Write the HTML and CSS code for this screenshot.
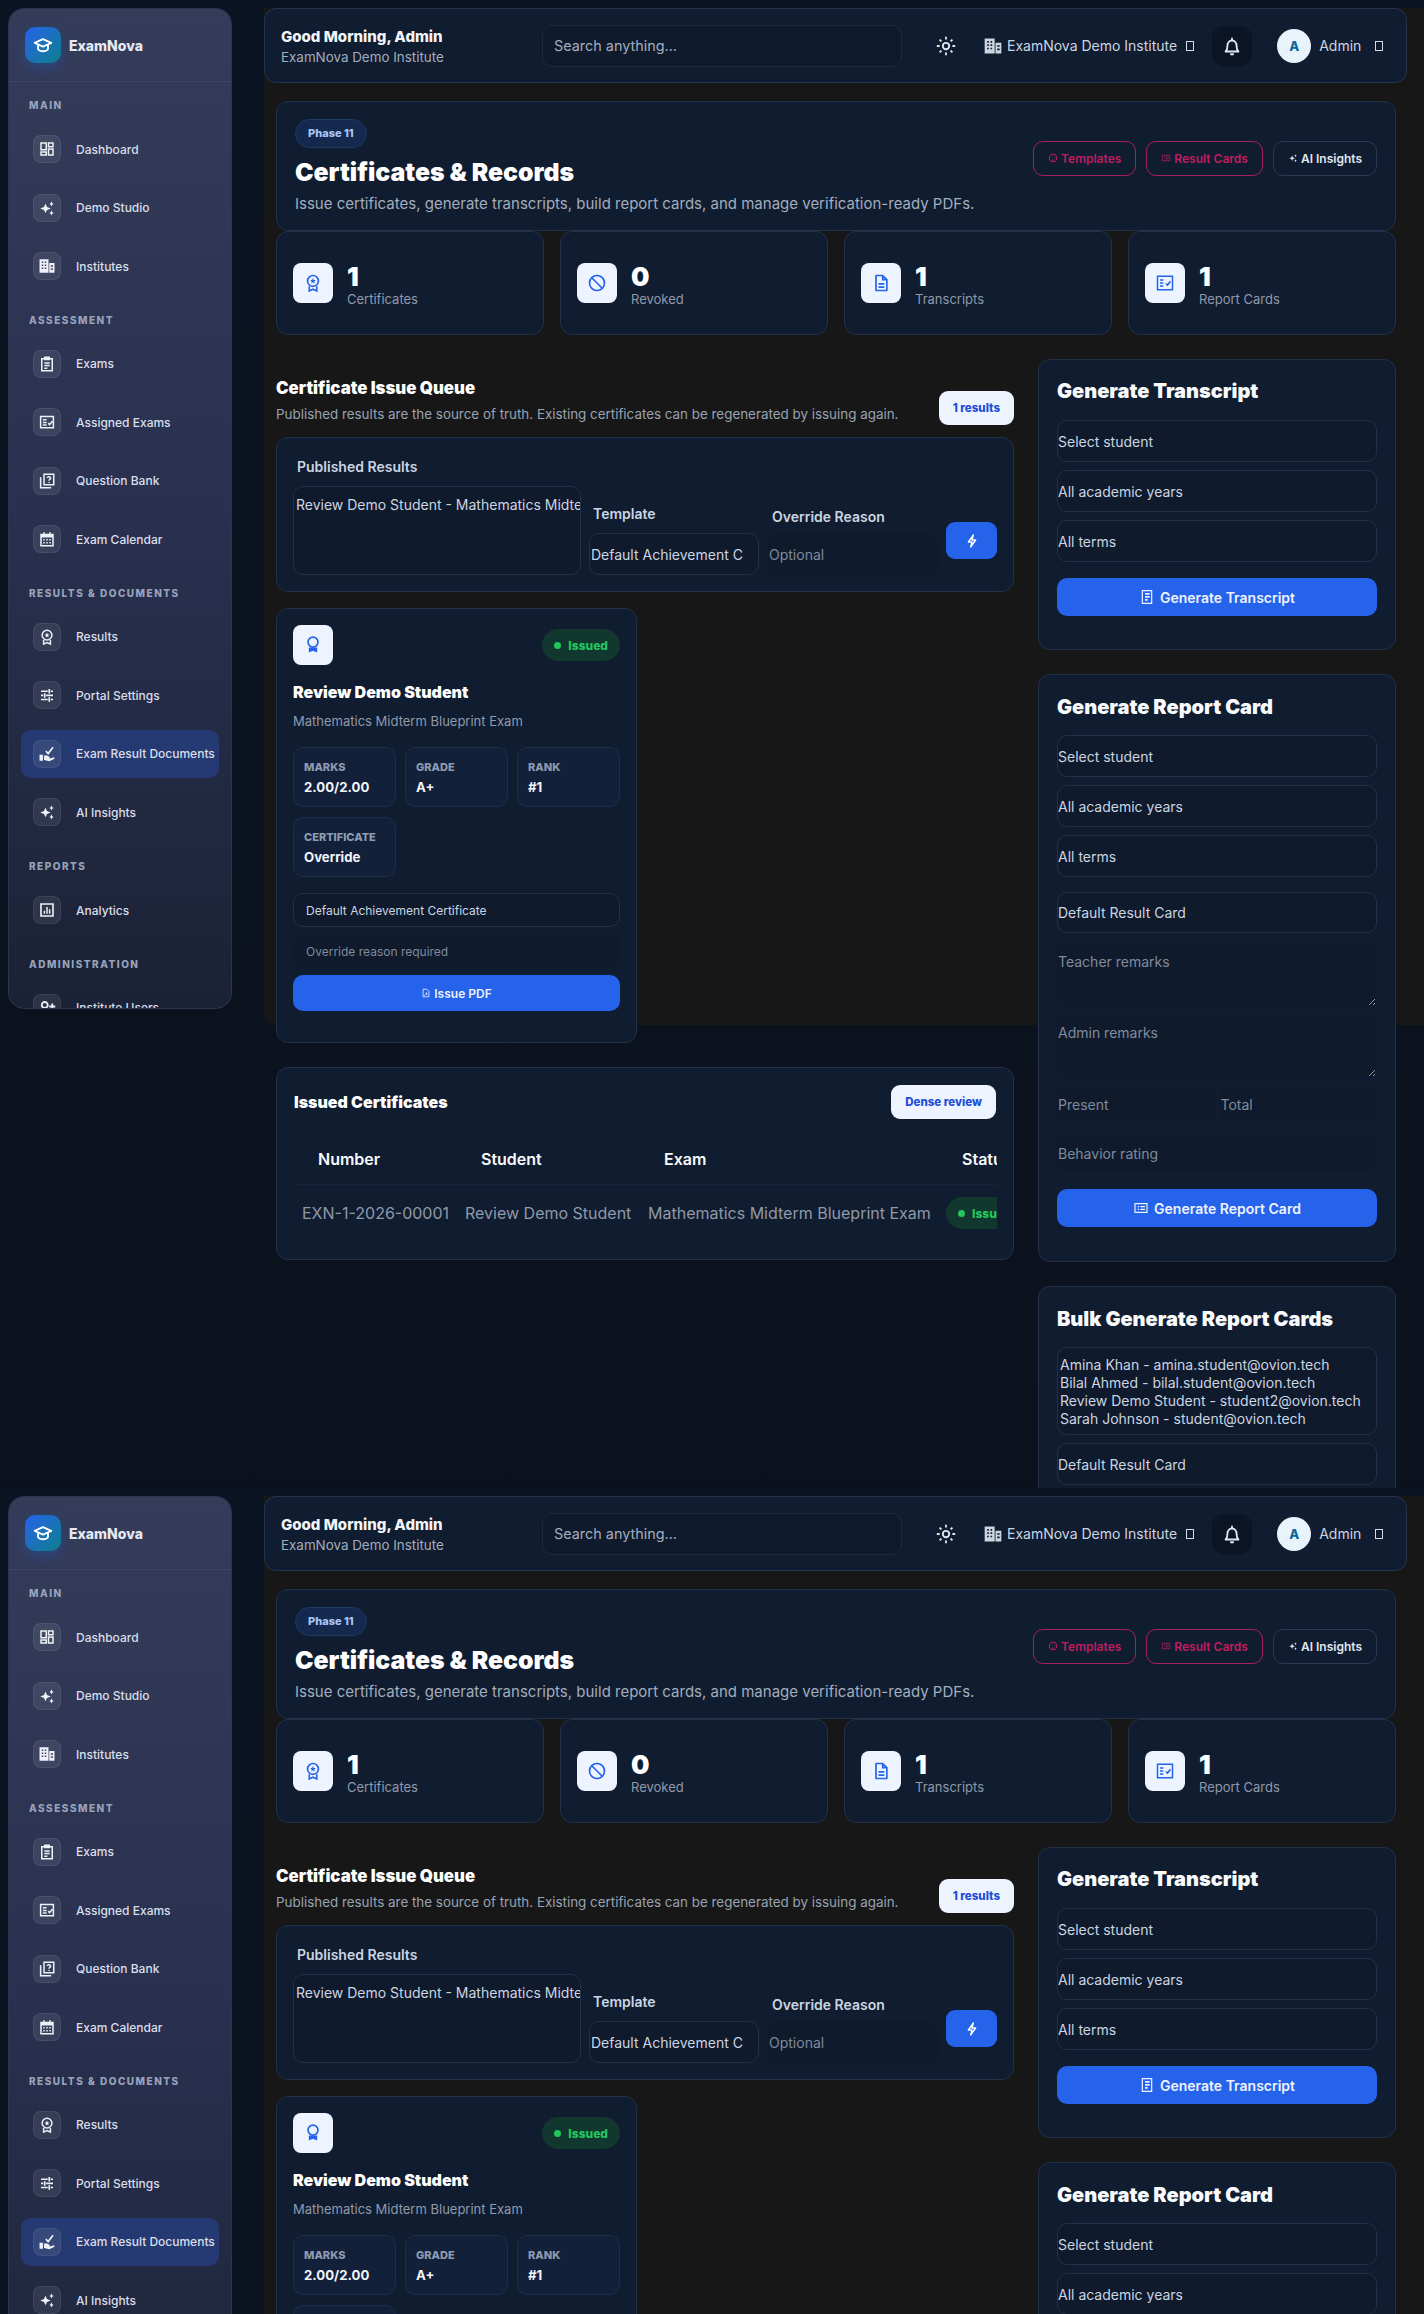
FILE: index.html
```html
<!DOCTYPE html>
<html lang="en">
<head>
  <meta charset="UTF-8">
  <meta name="viewport" content="width=device-width, initial-scale=1.0">
  <title>Certificates &amp; Records - ExamNova</title>
  <link rel="stylesheet" href="styles.css">
</head>
<body>
  <!-- icon set, used through <use> -->
  <svg class="icon-defs" xmlns="http://www.w3.org/2000/svg">
    <symbol id="i-cap" viewBox="0 0 24 24"><path d="M2 9.5 12 5l10 4.500-10 4.500zM6 12v4.500c0 1.500 3 3 6 3s6-1.500 6-3V12" fill="none" stroke="currentColor" stroke-width="2.200" stroke-linejoin="round"/></symbol>
    <symbol id="i-dash" viewBox="0 0 24 24"><path d="M4 4h7v9H4zM14 4h6v5h-6zM4 16h7v4H4zM14 12h6v8h-6z" fill="none" stroke="currentColor" stroke-width="2"/></symbol>
    <symbol id="i-stars" viewBox="0 0 24 24"><path d="m10 6 2 4.500 5 2-5 2-2 4.500-2-4.500-5-2 5-2zM18 3l1 2.500 2 1-2 1-1 2.500-1-2.500-2-1 2-1zM18 15l1 2.500 2 1-2 1-1 2.500-1-2.500-2-1 2-1z" fill="currentColor"/></symbol>
    <symbol id="i-building" viewBox="0 0 24 24"><path fill-rule="evenodd" d="M2 3h12v18H2zM5 6v2h2V6zm4 0v2h2V6zM5 10v2h2v-2zm4 0v2h2v-2zM5 14v2h2v-2zm4 0v2h2v-2zM15 8h7v13h-7zm2 3v2h3v-2zm0 4v2h3v-2z" fill="currentColor"/></symbol>
    <symbol id="i-clip" viewBox="0 0 24 24"><path d="M5 5h14v16H5zM9 3h6v3H9zM8.500 10.500h7M8.500 14h7M8.500 17.500h4" fill="none" stroke="currentColor" stroke-width="2"/></symbol>
    <symbol id="i-ballot" viewBox="0 0 24 24"><path d="M3.500 4.500h17v15h-17zM6.500 9h5M6.500 12.500h5M6.500 16h5M13.500 13.500l2 2 3.500-4.500" fill="none" stroke="currentColor" stroke-width="2"/></symbol>
    <symbol id="i-quiz" viewBox="0 0 24 24"><path d="M8 3h13v14H8zM3.500 7v14h14M12.300 8c.2-1.200 1.200-1.800 2.300-1.800s2.200.8 2.200 2c0 1.700-2.200 1.700-2.200 3.500M14.600 13.300v1.200" fill="none" stroke="currentColor" stroke-width="2"/></symbol>
    <symbol id="i-cal" viewBox="0 0 24 24"><path d="M4 6h16v15H4zM8 3v3M16 3v3" fill="none" stroke="currentColor" stroke-width="2"/><path d="M4 6h16v4H4zM7 12h2v2H7zm4 0h2v2h-2zm4 0h2v2h-2zM7 16h2v2H7zm4 0h2v2h-2zm4 0h2v2h-2z" fill="currentColor"/></symbol>
    <symbol id="i-award" viewBox="0 0 24 24"><circle cx="12" cy="9.500" r="6.500" fill="none" stroke="currentColor" stroke-width="2"/><path d="m12 6 1 2.300 2.400.2-1.800 1.600.5 2.400-2.100-1.300-2.100 1.300.5-2.400-1.800-1.600 2.400-.2z" fill="currentColor"/><path d="M7.500 16v5.500l4.500-2 4.500 2V16" fill="none" stroke="currentColor" stroke-width="2"/></symbol>
    <symbol id="i-tune" viewBox="0 0 24 24"><path d="M4 7h9M17 7h3M15 4v6M4 12.500h3M11 12.500h9M9 9.500v6M4 18h9M17 18h3M15 15v6" fill="none" stroke="currentColor" stroke-width="2.200"/></symbol>
    <symbol id="i-hand" viewBox="0 0 24 24"><path d="M2 13h4.500v8H2zM8 14h4l3 1.500c1.500.8.800 2.500-.8 2.200l-2.700-.5 4 .8 5-1.500c1.500-.3 2.200 1.200 1 2L15 21.500 8 20z" fill="currentColor"/><path d="m10.500 8 3 3.500L20 3" fill="none" stroke="currentColor" stroke-width="2.200"/></symbol>
    <symbol id="i-chart" viewBox="0 0 24 24"><path d="M4 4h16v16H4z" fill="none" stroke="currentColor" stroke-width="2.200"/><path d="M7.500 13h2v4h-2zm3.500-5h2v9h-2zm3.500 3h2v6h-2z" fill="currentColor"/></symbol>
    <symbol id="i-users" viewBox="0 0 24 24"><circle cx="9" cy="8" r="4" fill="none" stroke="currentColor" stroke-width="2.400"/><path d="M2 21c0-4 3-6 7-6s7 2 7 6M19 6v8M15 10h8" fill="none" stroke="currentColor" stroke-width="2.400"/></symbol>
    <symbol id="i-sun" viewBox="0 0 24 24"><circle cx="12" cy="12" r="3.500" fill="none" stroke="currentColor" stroke-width="2"/><path d="M12 2v3M12 19v3M2 12h3M19 12h3M5 5l2 2M17 17l2 2M5 19l2-2M17 7l2-2" stroke="currentColor" stroke-width="2"/></symbol>
    <symbol id="i-bell" viewBox="0 0 24 24"><path d="M5 18c1.500-1.500 2-3 2-6 0-3.500 2-6 5-6s5 2.500 5 6c0 3 .5 4.500 2 6zM12 3v3M10 21h4" fill="none" stroke="currentColor" stroke-width="2" stroke-linejoin="round"/></symbol>
    <symbol id="i-slash" viewBox="0 0 24 24"><circle cx="12" cy="12" r="9" fill="none" stroke="currentColor" stroke-width="2"/><path d="m5.700 5.700 12.600 12.600" stroke="currentColor" stroke-width="2"/></symbol>
    <symbol id="i-file" viewBox="0 0 24 24"><path d="M6 3h8l5 5v13H6zM14 3v5h5M9 13h7M9 17h7" fill="none" stroke="currentColor" stroke-width="2" stroke-linejoin="round"/></symbol>
    <symbol id="i-checklist" viewBox="0 0 24 24"><path d="M3 4h18v16H3zM6 8.500h4M6 12h4M6 15.500h4M13 12.500l2 2 3.500-4.500" fill="none" stroke="currentColor" stroke-width="1.800"/></symbol>
    <symbol id="i-ribbon" viewBox="0 0 24 24"><circle cx="12" cy="8.500" r="6" fill="none" stroke="currentColor" stroke-width="2"/><path d="M7 15h10v6l-5-2-5 2z" fill="currentColor"/></symbol>
    <symbol id="i-palette" viewBox="0 0 24 24"><circle cx="12" cy="12" r="9" fill="none" stroke="currentColor" stroke-width="2.500"/><path d="M8 9h2v2H8zm5-2h2v2h-2zm3 5h2v2h-2zm-5 3h2v4h-2z" fill="currentColor"/></symbol>
    <symbol id="i-card" viewBox="0 0 24 24"><path d="M3 5.500h18v13H3zM7 10h2M7 14h2M11 10h7M11 14h7" fill="none" stroke="currentColor" stroke-width="1.800"/></symbol>
    <symbol id="i-bolt" viewBox="0 0 24 24"><path d="M14 3 6.500 13.500H12L10 21l7.500-10.500H12z" fill="none" stroke="currentColor" stroke-width="2" stroke-linejoin="round"/></symbol>
    <symbol id="i-pdf" viewBox="0 0 24 24"><path d="M5 3h9l5 5v13H5zM8 18c3-1 5-4 5-7 0 3 1 5 3 6" fill="none" stroke="currentColor" stroke-width="2" stroke-linejoin="round"/></symbol>
    <symbol id="i-journal" viewBox="0 0 24 24"><path d="M5 2.500h14v19H5z" fill="none" stroke="currentColor" stroke-width="1.800"/><path d="M9 6h7v2.500H9zM9 10.500h7V13H9zM9 15h4v2.500H9z" fill="currentColor"/></symbol>
  </svg>

  <div class="frame">
    <aside class="sidebar">
      <div class="brand">
        <span class="brand-logo"><svg class="ic20"><use href="#i-cap"/></svg></span>
        <span class="brand-name">ExamNova</span>
      </div>
      <nav class="side-nav">
        <div class="nav-label">MAIN</div>
        <a class="nav-item"><span class="nav-ic"><svg class="ic18"><use href="#i-dash"/></svg></span>Dashboard</a>
        <a class="nav-item"><span class="nav-ic"><svg class="ic18"><use href="#i-stars"/></svg></span>Demo Studio</a>
        <a class="nav-item"><span class="nav-ic"><svg class="ic18"><use href="#i-building"/></svg></span>Institutes</a>

        <div class="nav-label">ASSESSMENT</div>
        <a class="nav-item"><span class="nav-ic"><svg class="ic18"><use href="#i-clip"/></svg></span>Exams</a>
        <a class="nav-item"><span class="nav-ic"><svg class="ic18"><use href="#i-ballot"/></svg></span>Assigned Exams</a>
        <a class="nav-item"><span class="nav-ic"><svg class="ic18"><use href="#i-quiz"/></svg></span>Question Bank</a>
        <a class="nav-item"><span class="nav-ic"><svg class="ic18"><use href="#i-cal"/></svg></span>Exam Calendar</a>

        <div class="nav-label">RESULTS &amp; DOCUMENTS</div>
        <a class="nav-item"><span class="nav-ic"><svg class="ic18"><use href="#i-award"/></svg></span>Results</a>
        <a class="nav-item"><span class="nav-ic"><svg class="ic18"><use href="#i-tune"/></svg></span>Portal Settings</a>
        <a class="nav-item active"><span class="nav-ic"><svg class="ic18"><use href="#i-hand"/></svg></span>Exam Result Documents</a>
        <a class="nav-item"><span class="nav-ic"><svg class="ic18"><use href="#i-stars"/></svg></span>AI Insights</a>

        <div class="nav-label">REPORTS</div>
        <a class="nav-item"><span class="nav-ic"><svg class="ic18"><use href="#i-chart"/></svg></span>Analytics</a>

        <div class="nav-label">ADMINISTRATION</div>
        <a class="nav-item"><span class="nav-ic"><svg class="ic18"><use href="#i-users"/></svg></span>Institute Users</a>
      </nav>
    </aside>

    <main class="main">
      <header class="topbar">
        <div class="top-title">
          <strong>Good Morning, Admin</strong>
          <span>ExamNova Demo Institute</span>
        </div>
        <input class="search" type="text" placeholder="Search anything...">
        <svg class="top-sun"><use href="#i-sun"/></svg>
        <div class="top-inst">
          <svg class="ic20"><use href="#i-building"/></svg>
          <span>ExamNova Demo Institute</span>
          <i class="tofu"></i>
        </div>
        <button class="bell"><svg class="ic22"><use href="#i-bell"/></svg></button>
        <div class="top-user">
          <span class="avatar">A</span>
          <span>Admin</span>
          <i class="tofu"></i>
        </div>
      </header>

      <div class="content">
        <section class="hero">
          <div>
            <span class="phase">Phase 11</span>
            <h1>Certificates &amp; Records</h1>
            <p>Issue certificates, generate transcripts, build report cards, and manage verification-ready PDFs.</p>
          </div>
          <div class="hero-actions">
            <a class="hero-btn pink"><svg class="ic10"><use href="#i-palette"/></svg>Templates</a>
            <a class="hero-btn pink"><svg class="ic10"><use href="#i-card"/></svg>Result Cards</a>
            <a class="hero-btn"><svg class="ic10"><use href="#i-stars"/></svg>AI Insights</a>
          </div>
        </section>

        <section class="stats">
          <div class="stat"><span class="tile"><svg class="ic20"><use href="#i-award"/></svg></span><div><b>1</b><span>Certificates</span></div></div>
          <div class="stat"><span class="tile"><svg class="ic20"><use href="#i-slash"/></svg></span><div><b>0</b><span>Revoked</span></div></div>
          <div class="stat"><span class="tile"><svg class="ic20"><use href="#i-file"/></svg></span><div><b>1</b><span>Transcripts</span></div></div>
          <div class="stat"><span class="tile"><svg class="ic20"><use href="#i-checklist"/></svg></span><div><b>1</b><span>Report Cards</span></div></div>
        </section>

        <div class="columns">
          <div class="col-left">
            <div class="queue-head">
              <div>
                <h2>Certificate Issue Queue</h2>
                <p>Published results are the source of truth. Existing certificates can be regenerated by issuing again.</p>
              </div>
              <span class="pill">1 results</span>
            </div>

            <form class="card queue-form">
              <div class="field">
                <label>Published Results</label>
                <select class="ctl tall" multiple><option>Review Demo Student - Mathematics Midterm Blueprint Exam</option></select>
              </div>
              <div class="field">
                <label>Template</label>
                <select class="ctl clipped"><option>Default Achievement Certificate</option></select>
              </div>
              <div class="field">
                <label class="lift">Override Reason</label>
                <input class="ctl bare" type="text" placeholder="Optional">
              </div>
              <button class="bolt" type="button"><svg class="ic16"><use href="#i-bolt"/></svg></button>
            </form>

            <article class="card result-card">
              <div class="result-top">
                <span class="tile"><svg class="ic20"><use href="#i-ribbon"/></svg></span>
                <span class="status"><i></i>Issued</span>
              </div>
              <h3>Review Demo Student</h3>
              <p>Mathematics Midterm Blueprint Exam</p>
              <div class="minis">
                <div class="mini"><small>MARKS</small><b>2.00/2.00</b></div>
                <div class="mini"><small>GRADE</small><b>A+</b></div>
                <div class="mini"><small>RANK</small><b>#1</b></div>
                <div class="mini"><small>CERTIFICATE</small><b>Override</b></div>
              </div>
              <select class="ctl small"><option>Default Achievement Certificate</option></select>
              <input class="ctl small bare" type="text" placeholder="Override reason required">
              <button class="btn small-btn" type="button"><svg class="ic10"><use href="#i-pdf"/></svg>Issue PDF</button>
            </article>

            <section class="card issued">
              <div class="issued-head">
                <h3>Issued Certificates</h3>
                <span class="pill">Dense review</span>
              </div>
              <div class="table-wrap">
                <table>
                  <thead>
                    <tr><th class="c1">Number</th><th class="c2">Student</th><th class="c3">Exam</th><th>Status</th></tr>
                  </thead>
                  <tbody>
                    <tr>
                      <td>EXN-1-2026-00001</td>
                      <td>Review Demo Student</td>
                      <td>Mathematics Midterm Blueprint Exam</td>
                      <td><span class="status"><i></i>Issued</span></td>
                    </tr>
                  </tbody>
                </table>
              </div>
            </section>
          </div>

          <div class="col-right">
            <form class="card side-form transcript">
              <h2>Generate Transcript</h2>
              <select class="ctl"><option>Select student</option></select>
              <select class="ctl"><option>All academic years</option></select>
              <select class="ctl"><option>All terms</option></select>
              <button class="btn" type="button"><svg class="ic16"><use href="#i-journal"/></svg>Generate Transcript</button>
            </form>

            <form class="card side-form report">
              <h2>Generate Report Card</h2>
              <select class="ctl"><option>Select student</option></select>
              <select class="ctl"><option>All academic years</option></select>
              <select class="ctl"><option>All terms</option></select>
              <select class="ctl tpl"><option>Default Result Card</option></select>
              <textarea class="ctl bare note" placeholder="Teacher remarks"></textarea>
              <textarea class="ctl bare note" placeholder="Admin remarks"></textarea>
              <div class="attend">
                <input class="ctl bare" type="text" placeholder="Present">
                <input class="ctl bare" type="text" placeholder="Total">
              </div>
              <input class="ctl bare rating" type="text" placeholder="Behavior rating">
              <button class="btn" type="button"><svg class="ic16"><use href="#i-card"/></svg>Generate Report Card</button>
            </form>

            <form class="card side-form bulk">
              <h2>Bulk Generate Report Cards</h2>
              <select class="ctl list" multiple>
                <option>Amina Khan - amina.student@ovion.tech</option>
                <option>Bilal Ahmed - bilal.student@ovion.tech</option>
                <option>Review Demo Student - student2@ovion.tech</option>
                <option>Sarah Johnson - student@ovion.tech</option>
              </select>
              <select class="ctl"><option>Default Result Card</option></select>
            </form>
          </div>
        </div>
      </div>
    </main>
  </div>

  <script src="app.js"></script>
</body>
</html>
```

FILE: styles.css
```css
* {
  box-sizing: border-box;
}

html,
body {
  margin: 0;
  height: 2314px;
  overflow: hidden;
}

body {
  background: #0b1220;
  color: #e2e8f0;
  font-family: Inter, "Noto Sans", sans-serif;
}

.icon-defs {
  display: none;
}

.ic10 { width: 10px; height: 10px; flex: none; }
.ic16 { width: 16px; height: 16px; flex: none; }
.ic18 { width: 18px; height: 18px; flex: none; }
.ic20 { width: 20px; height: 20px; flex: none; }
.ic22 { width: 22px; height: 22px; flex: none; }

/* one full copy of the app, the page shows it twice */
.frame {
  display: flex;
  height: 1488px;
  overflow: hidden;
  background: linear-gradient(180deg, #0a1322 0%, #0c121d 100%);
}

/* sidebar */
.sidebar {
  flex: none;
  width: 224px;
  height: 1001px;
  margin: 8px 0 0 8px;
  overflow: hidden;
  background: linear-gradient(180deg, #343c59 0%, #2a3150 50%, #1b2236 100%);
  border: 1px solid #2c3550;
  border-radius: 16px;
}

.brand {
  display: flex;
  align-items: center;
  gap: 8px;
  height: 73px;
  padding-left: 16px;
  border-bottom: 1px solid #3b4463;
}

.brand-logo {
  display: flex;
  align-items: center;
  justify-content: center;
  width: 36px;
  height: 36px;
  color: #fff;
  background: linear-gradient(135deg, #2563eb, #0f7f8c);
  border-radius: 10px;
  box-shadow: 0 6px 14px rgba(37, 99, 235, 0.25);
}

.brand-name {
  font-size: 14px;
  font-weight: 800;
  color: #e6e9f2;
}

.side-nav {
  padding: 16px 12px 0;
}

.nav-label {
  height: 14px;
  margin: 22.700px 0 13px 8px;
  font-size: 10px;
  font-weight: 800;
  line-height: 14px;
  letter-spacing: 1.5px;
  color: #98a3bb;
}

.nav-label:first-child {
  margin-top: 0;
}

.nav-item {
  display: flex;
  align-items: center;
  gap: 15px;
  height: 48px;
  margin-bottom: 10.500px;
  padding-left: 12px;
  font-size: 12px;
  font-weight: 500;
  color: #d9deea;
  border-radius: 10px;
}

.nav-item.active {
  background: #253a72;
}

.nav-ic {
  display: flex;
  align-items: center;
  justify-content: center;
  width: 28px;
  height: 28px;
  color: #eef1f7;
  background: rgba(255, 255, 255, 0.08);
  border: 1px solid rgba(255, 255, 255, 0.07);
  border-radius: 8px;
}

/* main panel */
.main {
  flex: 1;
  height: 1017px;
  margin: 8px 0 0 32px;
  background: #171717;
  border-radius: 0 0 0 12px;
}

.topbar {
  display: flex;
  align-items: center;
  height: 75px;
  margin-right: 17px;
  padding-left: 16px;
  background: #101c30;
  border: 1px solid #24344d;
  border-radius: 12px;
}

.top-title {
  display: flex;
  flex-direction: column;
  gap: 3px;
  width: 261px;
}

.top-title strong {
  font-size: 15px;
  font-weight: 800;
  color: #f1f5f9;
}

.top-title span {
  font-size: 13.400px;
  color: #a3adbc;
}

.search {
  width: 360px;
  height: 42px;
  padding: 0 11px;
  font: 14.400px Inter, sans-serif;
  color: #cbd5e1;
  background: #0f1a2c;
  border: 1px solid #1c2a40;
  border-radius: 10px;
}

.search::placeholder {
  color: #a3adbc;
}

.top-sun {
  width: 22px;
  height: 22px;
  margin-left: 33px;
  color: #e2e8f0;
}

.top-inst {
  display: flex;
  align-items: center;
  gap: 4px;
  margin-left: 26px;
  font-size: 14px;
  color: #cdd5e1;
}

.tofu {
  display: block;
  width: 8px;
  height: 10px;
  margin-left: 5px;
  border: 1px solid #d5dbe5;
}

.bell {
  display: flex;
  align-items: center;
  justify-content: center;
  width: 40px;
  height: 40px;
  margin-left: 18px;
  padding: 0;
  color: #e2e8f0;
  background: #0b1525;
  border: 0;
  border-radius: 12px;
}

.top-user {
  display: flex;
  align-items: center;
  gap: 8px;
  margin-left: 25px;
  font-size: 14px;
  color: #cdd5e1;
}

.top-user .tofu {
  margin-left: 6px;
}

.avatar {
  display: flex;
  align-items: center;
  justify-content: center;
  width: 34px;
  height: 34px;
  font-size: 13px;
  font-weight: 800;
  color: #0a6a9e;
  background: #e8f3fc;
  border-radius: 50%;
}

.content {
  padding: 18px 28px 0 12px;
}

/* hero + stats */
.hero {
  display: flex;
  align-items: center;
  justify-content: space-between;
  height: 130px;
  padding: 16px 18px;
  background: #101c30;
  border: 1px solid #223049;
  border-radius: 12px;
}

.phase {
  display: inline-block;
  height: 29px;
  padding: 0 12px;
  font-size: 11px;
  font-weight: 800;
  line-height: 27px;
  color: #a9c4f5;
  background: #14294d;
  border: 1px solid #1e3a66;
  border-radius: 15px;
}

.hero h1 {
  margin: 8px 0 6px;
  font-size: 24.800px;
  font-weight: 900;
  line-height: 32px;
  color: #fff;
}

.hero p {
  margin: 0;
  font-size: 15px;
  line-height: 20px;
  color: #a3adbc;
}

.hero-actions {
  display: flex;
  gap: 10px;
  margin-bottom: 16px;
}

.hero-btn {
  display: flex;
  align-items: center;
  gap: 3px;
  height: 35px;
  padding: 0 14px;
  font-size: 12px;
  font-weight: 600;
  color: #e2e8f0;
  border: 1px solid #2a3a52;
  border-radius: 10px;
}

.hero-btn.pink {
  color: #be1f5f;
  border-color: #a81f5d;
}

.stats {
  display: grid;
  grid-template-columns: repeat(4, 1fr);
  gap: 16px;
}

.stat {
  display: flex;
  align-items: center;
  gap: 14px;
  height: 104px;
  padding-left: 16px;
  background: #101c30;
  border: 1px solid #223049;
  border-radius: 12px;
}

.stat div {
  padding-top: 4px;
}

.stat b {
  display: block;
  font-size: 26px;
  font-weight: 900;
  line-height: 28px;
  color: #fff;
}

.stat div span {
  display: block;
  font-size: 13px;
  line-height: 16px;
  color: #8f9aab;
}

.tile {
  display: flex;
  align-items: center;
  justify-content: center;
  width: 40px;
  height: 40px;
  color: #2563eb;
  background: #eef4ff;
  border-radius: 8px;
}

/* two column area */
.columns {
  display: grid;
  grid-template-columns: 738px 358px;
  gap: 24px;
  margin-top: 24px;
}

.card {
  background: #101c30;
  border: 1px solid #223049;
  border-radius: 12px;
}

.queue-head {
  display: flex;
  align-items: flex-end;
  justify-content: space-between;
  margin: 19px 0 13px;
}

.queue-head h2 {
  margin: 0 0 6px;
  font-size: 16.800px;
  font-weight: 900;
  line-height: 20px;
  color: #fff;
}

.queue-head p {
  margin: 0;
  font-size: 13.400px;
  line-height: 20px;
  color: #99a3b2;
}

.queue-head .pill {
  margin-bottom: -1px;
}

.pill {
  display: inline-block;
  height: 34px;
  padding: 0 14px;
  font-size: 11.500px;
  font-weight: 800;
  line-height: 34px;
  color: #1d4ed8;
  background: #eef4ff;
  border-radius: 9px;
}

.ctl {
  display: block;
  width: 100%;
  height: 42px;
  padding: 0 1px;
  font: 14px Inter, sans-serif;
  color: #cbd5e1;
  background: #0f1a2c;
  border: 1px solid #223049;
  border-radius: 10px;
  outline: 0;
  appearance: none;
}

.ctl.bare {
  background: #0f1a2c;
  border-color: transparent;
}

.ctl::placeholder {
  color: #7f8b9c;
}

select.ctl.clipped {
  padding-right: 15px;
}

select[multiple].ctl {
  overflow: hidden;
}

select[multiple].ctl option {
  color: #cbd5e1;
  background: transparent;
}

.queue-form {
  display: grid;
  grid-template-columns: 288px 170px 171px 51px;
  gap: 8px;
  align-items: end;
  height: 155px;
  padding: 0 16px 16px;
}

.field label {
  display: block;
  margin: 0 0 11px 4px;
  font-size: 14px;
  font-weight: 600;
  line-height: 16px;
  color: #cbd5e1;
}

.field .lift {
  margin: 0 0 8px 5px;
}

select[multiple].tall {
  height: 89px;
  padding: 9px 0 0;
}

.bolt {
  display: flex;
  align-items: center;
  justify-content: center;
  width: 51px;
  height: 37px;
  margin-bottom: 16px;
  padding: 0;
  color: #fff;
  background: #2563eb;
  border: 0;
  border-radius: 9px;
}

/* issued result card */
.result-card {
  width: 361px;
  height: 435px;
  margin-top: 16px;
  padding: 16px;
}

.result-top {
  display: flex;
  align-items: center;
  justify-content: space-between;
}

.status {
  display: inline-flex;
  align-items: center;
  gap: 7px;
  height: 32px;
  padding: 0 12px;
  font-size: 12px;
  font-weight: 800;
  color: #22c55e;
  background: #12372f;
  border-radius: 16px;
}

.status i {
  width: 7px;
  height: 7px;
  background: #22c55e;
  border-radius: 50%;
}

.result-card h3 {
  margin: 16px 0 8px;
  font-size: 16px;
  font-weight: 900;
  line-height: 22px;
  color: #fff;
}

.result-card p {
  margin: 0 0 16px;
  font-size: 13px;
  line-height: 20px;
  color: #8f9aab;
}

.minis {
  display: grid;
  grid-template-columns: repeat(3, 1fr);
  gap: 10px 9px;
}

.mini {
  height: 60px;
  padding: 12px 10px 0;
  background: #12203a;
  border: 1px solid #1f2f49;
  border-radius: 10px;
}

.mini small {
  display: block;
  font-size: 11px;
  font-weight: 800;
  line-height: 14px;
  color: #8e9bb0;
}

.mini b {
  display: block;
  margin-top: 3px;
  font-size: 13.200px;
  font-weight: 700;
  line-height: 20px;
  color: #f1f5f9;
}

.ctl.small {
  height: 34px;
  margin-top: 16px;
  padding: 0 12px;
  font-size: 12px;
}

.ctl.small.bare {
  height: 32px;
  margin-top: 8px;
  color: #7f8b9c;
}

.btn {
  display: flex;
  align-items: center;
  justify-content: center;
  gap: 5px;
  width: 100%;
  height: 38px;
  padding: 0;
  font: 600 14px Inter, sans-serif;
  color: #eef2ff;
  background: #2563eb;
  border: 0;
  border-radius: 10px;
}

.btn.small-btn {
  height: 36px;
  margin-top: 8px;
  font-size: 12px;
  gap: 3px;
}

/* issued certificates table */
.issued {
  height: 193px;
  margin-top: 24px;
  padding: 17px 17px 0;
}

.issued-head {
  display: flex;
  align-items: center;
  justify-content: space-between;
  height: 34px;
}

.issued-head h3 {
  margin: 0;
  font-size: 16px;
  font-weight: 900;
  color: #fff;
}

.table-wrap {
  width: 703px;
  margin-top: 15px;
  overflow: hidden;
}

table {
  border-collapse: collapse;
  white-space: nowrap;
  table-layout: fixed;
  width: 760px;
}

th {
  height: 50px;
  padding: 0 0 0 24px;
  font-size: 16px;
  font-weight: 600;
  text-align: left;
  color: #f8fafc;
  border-bottom: 1px solid #16233a;
}

td {
  height: 58px;
  padding: 0 0 0 8px;
  font-size: 16px;
  color: #8f99a8;
}

.c1 { width: 163px; }
.c2 { width: 183px; }
.c3 { width: 298px; }

/* right column */
.col-right .side-form {
  padding: 19px 18px 0;
}

.side-form h2 {
  margin: 0 0 17px;
  font-size: 20px;
  font-weight: 900;
  line-height: 24px;
  color: #f8fafc;
}

.side-form .ctl {
  margin-bottom: 8px;
  padding-left: 0;
}

.col-right .report,
.col-right .bulk {
  padding-top: 20px;
}

.report h2,
.bulk h2 {
  margin-bottom: 16px;
}

.transcript {
  height: 291px;
}

.transcript .btn {
  margin-top: 16px;
}

.report {
  height: 588px;
  margin-top: 24px;
}

.report .tpl {
  height: 41px;
  margin-top: 15px;
  margin-bottom: 11px;
}

.report .note {
  height: 63px;
  padding-top: 8px;
  background: #0f1a2c;
}

.attend {
  display: grid;
  grid-template-columns: 1fr 1fr;
  gap: 5px;
}

.attend .ctl {
  height: 36px;
}

.report .rating {
  height: 38px;
  margin-top: 4px;
}

.report .btn {
  margin-top: 17px;
}

.bulk {
  height: 240px;
  margin-top: 24px;
}

select[multiple].list {
  height: 88px;
  padding: 8px 0 0;
}

.list option {
  padding-bottom: 1px;
}
```

FILE: app.js
```js
// the screenshot holds the same app frame twice, one under the other
const frame = document.querySelector('.frame');
document.body.appendChild(frame.cloneNode(true));
```
